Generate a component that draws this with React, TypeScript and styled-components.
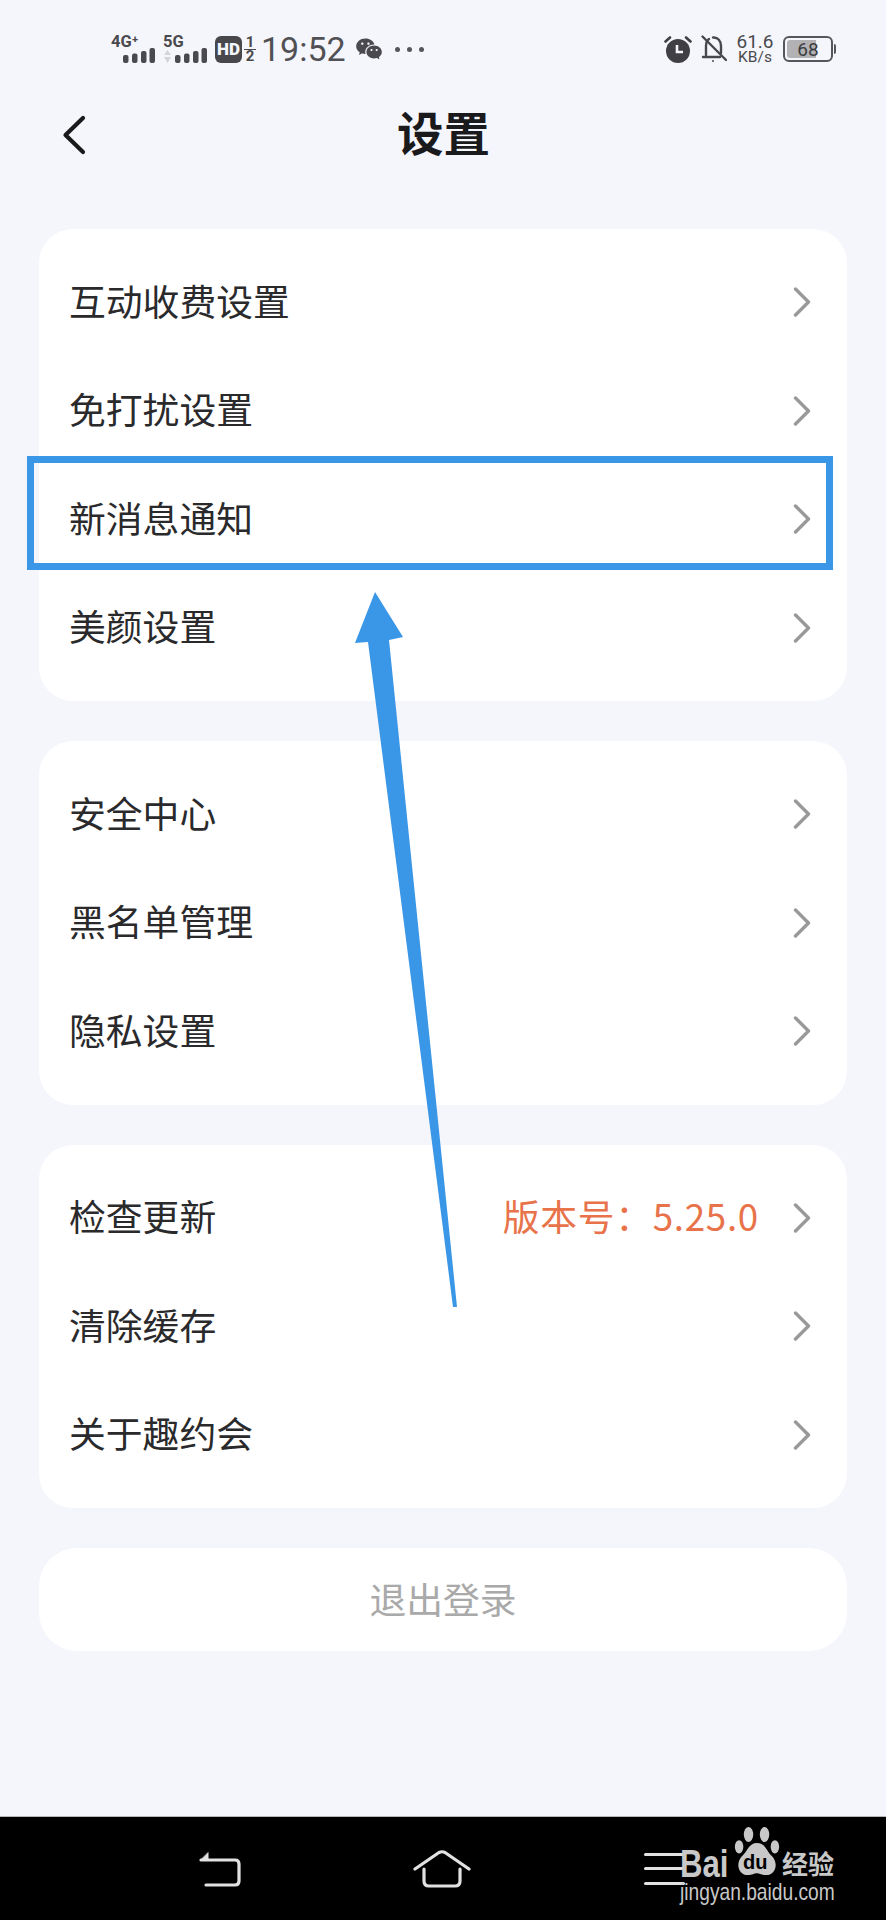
import React from "react";
import styled, { createGlobalStyle } from "styled-components";
import { RiWechatFill } from "react-icons/ri";

const GlobalStyle = createGlobalStyle`
  html, body {
    margin: 0;
    padding: 0;
    background: #f5f6fb;
  }
`;

const sections = [
  [
    { label: "互动收费设置" },
    { label: "免打扰设置" },
    { label: "新消息通知", highlight: true },
    { label: "美颜设置" },
  ],
  [{ label: "安全中心" }, { label: "黑名单管理" }, { label: "隐私设置" }],
  [{ label: "检查更新", value: "版本号：5.25.0" }, { label: "清除缓存" }, { label: "关于趣约会" }],
];

const Bars = ({ data }: { data?: boolean }) => (
  <svg width="44" height="15" viewBox="0 0 44 15" fill="#4a4a4e">
    {data && <path d="M4.500 2 L8 7 H1 Z M4.500 15 L1 9 H8 Z" fill="#d4d4d8" />}
    <rect x="12" y="7" width="5.500" height="8" rx="2" />
    <rect x="21" y="5.500" width="5.500" height="9.500" rx="2" />
    <rect x="30" y="3" width="5.500" height="12" rx="2" />
    <rect x="38.500" y="0" width="5.500" height="15" rx="2" />
  </svg>
);

const Chevron = () => (
  <ChevronIcon width="18" height="30" viewBox="0 0 18 30" fill="none">
    <path d="M2.500 2 L15.500 15 L2.500 28" stroke="#999" strokeWidth="3.400" strokeLinecap="round" strokeLinejoin="round" />
  </ChevronIcon>
);

const App = () => {
  return (
    <Page>
      <GlobalStyle />
      <StatusBar>
        <Signal>
          <SignalLabel>4G⁺</SignalLabel>
          <Bars />
        </Signal>
        <Signal>
          <SignalLabel>5G</SignalLabel>
          <Bars data />
        </Signal>
        <HdBadge>HD</HdBadge>
        <SimStack>
          <span>1</span>
          <span>2</span>
        </SimStack>
        <Clock>19:52</Clock>
        <RiWechatFill size={28} color="#4a4a4e" />
        <Dots>
          <i />
          <i />
          <i />
        </Dots>
        <StatusRight>
          <svg width="28" height="28" viewBox="0 0 28 28">
            <circle cx="14" cy="16" r="12" fill="#3f3f44" />
            <path d="M13 10 V17 H19" stroke="#f5f6fb" strokeWidth="2.600" fill="none" />
            <path d="M1.500 6.500 L6 2.500 M26.500 6.500 L22 2.500" stroke="#3f3f44" strokeWidth="2.600" strokeLinecap="round" />
          </svg>
          <svg width="26" height="28" viewBox="0 0 26 28" fill="none" stroke="#48484c" strokeWidth="2.400">
            <path d="M5 20 V11 C5 7 6.500 5 8 4 M12 2.500 C17 2 20 6 20 11 V18" strokeLinecap="round" />
            <path d="M2 22 H19" strokeLinecap="round" />
            <path d="M1.500 1.500 L25 25" strokeLinecap="round" />
            <circle cx="12" cy="26" r="1" fill="#48484c" stroke="none" />
          </svg>
          <Speed>
            <b>61.6</b>
            <span>KB/s</span>
          </Speed>
          <Battery>
            <BatteryFill style={{ width: "68%" }} />
            <BatteryText>68</BatteryText>
          </Battery>
        </StatusRight>
      </StatusBar>

      <Header>
        <BackIcon width="24" height="40" viewBox="0 0 24 40" fill="none">
          <path d="M21 3 L3.500 20 L21 37" stroke="#1a1a1c" strokeWidth="4.200" strokeLinecap="round" strokeLinejoin="round" />
        </BackIcon>
        <Title>设置</Title>
      </Header>

      <Content>
        {sections.map((rows, i) => (
          <Card key={i}>
            {rows.map((row: { label: string; value?: string; highlight?: boolean }) => (
              <Row key={row.label} $highlight={row.highlight}>
                <RowLabel>{row.label}</RowLabel>
                {row.value && <RowValue>{row.value}</RowValue>}
                <Chevron />
              </Row>
            ))}
          </Card>
        ))}
        <LogoutButton>退出登录</LogoutButton>
      </Content>

      <NavBar>
        <svg width="44" height="36" viewBox="0 0 44 36" fill="none" stroke="#e2e2e2" strokeWidth="3.200" strokeLinecap="round">
          <path d="M3 9 H37 Q41 9 41 13 V30 Q41 34 37 34 H8" />
          <path d="M10 2 L10 9 L3 9 Z" fill="#e2e2e2" strokeWidth="1" />
        </svg>
        <svg width="58" height="38" viewBox="0 0 58 38" fill="none" stroke="#e2e2e2" strokeWidth="3.200" strokeLinecap="round" strokeLinejoin="round">
          <path d="M2 19 L26 2.500 Q29 1 32 2.500 L56 19" />
          <path d="M11 19 V31 Q11 36 16 36 H42 Q47 36 47 31 V19" />
        </svg>
        <MenuIcon>
          <i />
          <i />
          <i />
        </MenuIcon>
      </NavBar>

      <Arrow viewBox="0 0 886 1920" width="886" height="1920">
        <polygon points="375,592 403,637 389,640 457,1307 453,1307 368,642 355,643" fill="#3a96e6" />
      </Arrow>

      <Watermark>
        <WatermarkLogo>
          <BaiText>Bai</BaiText>
          <Paw>
            <svg width="46" height="49" viewBox="0 0 48 52" fill="#c8c8c8">
              <ellipse cx="15" cy="8" rx="5" ry="8" />
              <ellipse cx="32" cy="8" rx="5" ry="8" />
              <ellipse cx="5" cy="21" rx="4.500" ry="7" />
              <ellipse cx="43" cy="21" rx="4.500" ry="7" />
              <path d="M24 17 C33 17 34 26 40 31 C47 38 44 51 34 51 C29 51 27 49 24 49 C21 49 19 51 14 51 C4 51 1 38 8 31 C14 26 15 17 24 17 Z" />
            </svg>
            <DuText>du</DuText>
          </Paw>
          <JingyanText>经验</JingyanText>
        </WatermarkLogo>
        <WatermarkUrl>jingyan.baidu.com</WatermarkUrl>
      </Watermark>
    </Page>
  );
};

const Page = styled.div`
  position: relative;
  width: 886px;
  height: 1920px;
  overflow: hidden;
  display: flex;
  flex-direction: column;
  background: #f5f6fb;
  font-family: "Noto Sans CJK SC", "Noto Sans", sans-serif;
  color: #222;
`;

const StatusBar = styled.div`
  height: 98px;
  box-sizing: border-box;
  padding: 0 53px 0 111px;
  display: flex;
  align-items: center;
  font-family: Roboto, "Liberation Sans", sans-serif;
  color: #4a4a4e;
`;

const Signal = styled.div`
  width: 44px;
  margin-right: 8px;
  display: flex;
  flex-direction: column;
  align-items: flex-end;
`;

const SignalLabel = styled.span`
  align-self: flex-start;
  font-size: 16.500px;
  line-height: 13px;
  font-weight: 700;
  white-space: nowrap;
`;

const HdBadge = styled.div`
  width: 27px;
  height: 27px;
  border-radius: 6px;
  background: #48484c;
  color: #f5f6fb;
  font-size: 17px;
  font-weight: 900;
  display: flex;
  align-items: center;
  justify-content: center;
`;

const SimStack = styled.div`
  width: 12px;
  margin-left: 2px;
  display: flex;
  flex-direction: column;
  align-items: center;
  font-size: 15px;
  font-weight: 700;
  line-height: 13px;

  span:first-child {
    width: 100%;
    text-align: center;
    border-bottom: 1px solid #4a4a4e;
  }
`;

const Clock = styled.span`
  margin: 0 9px 0 5px;
  font-size: 34px;
  font-weight: 400;
  line-height: 34px;
  color: #515155;
`;

const Dots = styled.div`
  margin-left: 12px;
  display: flex;
  gap: 7px;

  i {
    width: 5px;
    height: 5px;
    border-radius: 50%;
    background: #55555a;
  }
`;

const StatusRight = styled.div`
  margin-left: auto;
  display: flex;
  align-items: center;
  gap: 9px;
`;

const Speed = styled.div`
  width: 38px;
  display: flex;
  flex-direction: column;
  align-items: center;

  b {
    font-size: 19px;
    line-height: 16px;
    font-weight: 400;
  }

  span {
    font-size: 15.500px;
    line-height: 14px;
  }
`;

const Battery = styled.div`
  position: relative;
  width: 50px;
  height: 26px;
  box-sizing: border-box;
  border: 2px solid #55555a;
  border-radius: 6px;
  padding: 2px;

  &::after {
    content: "";
    position: absolute;
    right: -5px;
    top: 6px;
    width: 2px;
    height: 10px;
    background: #55555a;
    border-radius: 0 2px 2px 0;
  }
`;

const BatteryFill = styled.div`
  height: 100%;
  background: #b2b2b4;
  border-radius: 3px 0 0 3px;
`;

const BatteryText = styled.span`
  position: absolute;
  inset: 0;
  display: flex;
  align-items: center;
  justify-content: center;
  font-size: 19px;
  color: #3c3c40;
`;

const Header = styled.div`
  position: relative;
  height: 72px;
  display: flex;
  align-items: flex-start;
  justify-content: center;
`;

const BackIcon = styled.svg`
  position: absolute;
  left: 62px;
  top: 17px;
`;

const Title = styled.h1`
  margin: -3px 0 0 1px;
  font-size: 46.500px;
  line-height: 72px;
  font-weight: 700;
  color: #1a1a1c;
`;

const Content = styled.div`
  padding: 59px 39px 0;
  display: flex;
  flex-direction: column;
  gap: 40px;
`;

const Card = styled.div`
  padding: 19px 0;
  border-radius: 34px;
  background: #fff;
`;

const Row = styled.div<{ $highlight?: boolean }>`
  position: relative;
  height: 108.500px;
  box-sizing: border-box;
  padding: 0 36px 0 30px;
  display: flex;
  align-items: center;

  ${(p) =>
    p.$highlight &&
    `
    &::after {
      content: "";
      position: absolute;
      left: -12px;
      right: 14px;
      top: -9px;
      bottom: 4px;
      border: 7px solid #3a96e6;
    }
  `}
`;

const RowLabel = styled.span`
  flex: 1;
  margin-bottom: 5px;
  font-size: 36.800px;
  line-height: 48px;
  color: #2a2a2c;
`;

const RowValue = styled.span`
  margin: 0 34px 5px 0;
  font-size: 36.800px;
  line-height: 48px;
  letter-spacing: 0.7px;
  color: #e8734a;
`;

const ChevronIcon = styled.svg`
  flex-shrink: 0;
`;

const LogoutButton = styled.div`
  height: 103px;
  padding-bottom: 4px;
  box-sizing: border-box;
  border-radius: 38px;
  background: #fff;
  display: flex;
  align-items: center;
  justify-content: center;
  font-size: 36.800px;
  color: #a9a9a9;
`;

const NavBar = styled.div`
  margin-top: auto;
  height: 104px;
  box-sizing: border-box;
  border-top: 1px solid #b8b8b8;
  padding: 0 110px 0 109px;
  background: #000;
  display: grid;
  grid-template-columns: repeat(3, 1fr);
  align-items: center;
  justify-items: center;
`;

const MenuIcon = styled.div`
  width: 41px;
  display: flex;
  flex-direction: column;
  gap: 11.500px;

  i {
    height: 3px;
    border-radius: 2px;
    background: #e2e2e2;
  }
`;

const Arrow = styled.svg`
  position: absolute;
  inset: 0;
  pointer-events: none;
`;

const Watermark = styled.div`
  position: absolute;
  left: 680px;
  top: 1827px;
  width: 158px;
  color: #c8c8c8;
`;

const WatermarkLogo = styled.div`
  height: 49px;
  display: flex;
  align-items: flex-end;
`;

const BaiText = styled.span`
  width: 54px;
  margin-bottom: -6px;
  font-family: "Liberation Sans", sans-serif;
  font-size: 38px;
  line-height: 36px;
  font-weight: 700;
  transform: scaleX(0.82);
  transform-origin: left;
`;

const Paw = styled.div`
  position: relative;
  width: 46px;
  height: 49px;
`;

const DuText = styled.span`
  position: absolute;
  left: 9px;
  top: 25px;
  font-family: "Liberation Sans", sans-serif;
  font-size: 20px;
  line-height: 20px;
  font-weight: 700;
  color: #000;
`;

const JingyanText = styled.span`
  margin: 0 0 -3px 2px;
  font-size: 26px;
  line-height: 32px;
  font-weight: 700;
  white-space: nowrap;
`;

const WatermarkUrl = styled.div`
  margin-top: 4px;
  font-family: "Liberation Sans", sans-serif;
  font-size: 24px;
  line-height: 24px;
  white-space: nowrap;
  transform: scaleX(0.8);
  transform-origin: left;
`;

export default App;
